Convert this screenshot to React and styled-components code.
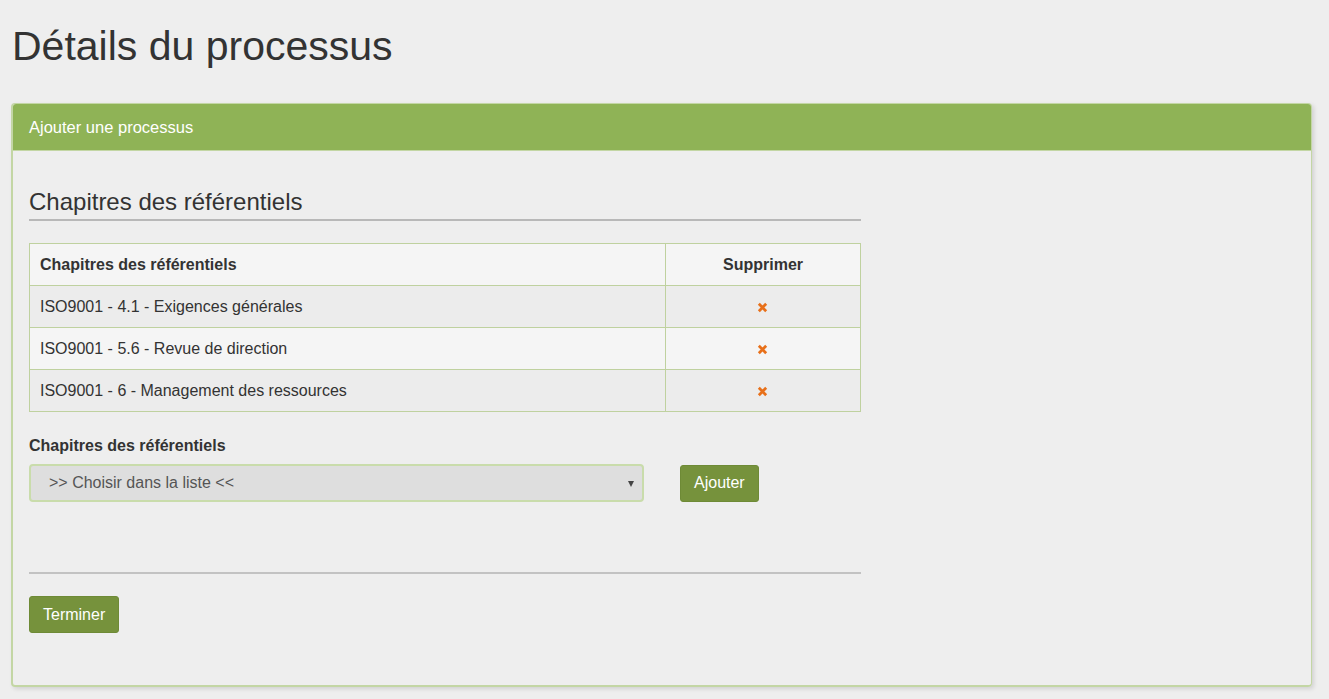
import React from "react";
import styled, { createGlobalStyle } from "styled-components";

const GlobalStyle = createGlobalStyle`
  html, body {
    margin: 0;
    padding: 0;
    background: #eeeeee;
    font-family: "Liberation Sans", Arial, sans-serif;
    color: #333;
  }
  * { box-sizing: border-box; }
`;

const Page = styled.div`
  padding: 0 17px 12px 11px;
`;

const PageTitle = styled.h1`
  margin: 0;
  padding: 23px 0 0 1px;
  height: 103px;
  font-size: 41px;
  font-weight: 400;
  color: #333;
`;

const Panel = styled.div`
  border: 1px solid #c3d6a4;
  border-radius: 4px;
  box-shadow: 2px 2px 4px rgba(0, 0, 0, 0.12);
  border-left-width: 2px;
  border-bottom-width: 2px;
`;

const PanelHeading = styled.div`
  background: #8fb356;
  color: #fff;
  height: 47px;
  padding: 0 16px;
  display: flex;
  align-items: center;
  font-size: 16.5px;
  border-radius: 3px 3px 0 0;
  border-bottom: 1px solid #c3d6a4;
`;

const PanelBody = styled.div`
  padding: 37px 16px 52px 16px;
`;

const Column = styled.div`
  width: 832px;
`;

const SectionTitle = styled.h3`
  margin: 0;
  font-size: 24px;
  font-weight: 400;
  color: #333;
  padding-bottom: 3px;
  border-bottom: 2px solid #b8b8b8;
`;

const Table = styled.table`
  width: 100%;
  margin-top: 22px;
  border-collapse: collapse;
  font-size: 16px;
`;

const Th = styled.th`
  height: 42px;
  border: 1px solid #bfd19f;
  background: #f5f5f5;
  font-weight: 700;
  text-align: ${(p) => (p.$center ? "center" : "left")};
  padding: 0 10px;
  width: ${(p) => p.$w || "auto"};
`;

const Row = styled.tr`
  background: ${(p) => (p.$odd ? "#ececec" : "#f5f5f5")};
`;

const Td = styled.td`
  height: 42px;
  border: 1px solid #bfd19f;
  padding: 0 10px;
  text-align: ${(p) => (p.$center ? "center" : "left")};
`;

const DeleteIcon = styled.svg`
  width: 11px;
  height: 11px;
  vertical-align: middle;
  display: inline-block;
  margin-left: -2px;
`;

const FieldLabel = styled.label`
  display: block;
  margin-top: 25px;
  font-size: 16px;
  font-weight: 700;
  color: #333;
`;

const FieldRow = styled.div`
  display: flex;
  align-items: center;
  gap: 36px;
  margin-top: 9px;
`;

const Select = styled.div`
  position: relative;
  width: 615px;
  height: 38px;
  background: #dedede;
  border: 2px solid #c9dcab;
  border-radius: 4px;
  padding: 0 18px;
  display: flex;
  align-items: center;
  font-size: 16px;
  color: #555;
`;

const Caret = styled.span`
  position: absolute;
  right: 8px;
  top: 15px;
  width: 0;
  height: 0;
  border-left: 3px solid transparent;
  border-right: 3px solid transparent;
  border-top: 6px solid #444;
`;

const Button = styled.button`
  height: 37px;
  padding: 0 13px;
  background: #76923c;
  border: 1px solid #6e8a36;
  border-radius: 3px;
  color: #fff;
  font-family: "Liberation Sans", Arial, sans-serif;
  font-size: 16px;
  cursor: pointer;
`;

const Divider = styled.hr`
  margin: 70px 0 0;
  border: 0;
  border-top: 2px solid #c2c2c2;
`;

const FinishRow = styled.div`
  margin-top: 22px;
`;

const Cross = () => (
  <DeleteIcon viewBox="0 0 12 12">
    <path d="M2 2 L10 10 M10 2 L2 10" stroke="#e8701a" strokeWidth="3" strokeLinecap="butt" />
  </DeleteIcon>
);

const chapitres = [
  "ISO9001 - 4.1 - Exigences générales",
  "ISO9001 - 5.6 - Revue de direction",
  "ISO9001 - 6 - Management des ressources",
];

export default function App() {
  return (
    <Page>
      <GlobalStyle />
      <PageTitle>Détails du processus</PageTitle>
      <Panel>
        <PanelHeading>Ajouter une processus</PanelHeading>
        <PanelBody>
          <Column>
            <SectionTitle>Chapitres des référentiels</SectionTitle>
            <Table>
              <thead>
                <tr>
                  <Th>Chapitres des référentiels</Th>
                  <Th $center $w="195px">Supprimer</Th>
                </tr>
              </thead>
              <tbody>
                {chapitres.map((c, i) => (
                  <Row key={c} $odd={i % 2 === 0}>
                    <Td>{c}</Td>
                    <Td $center>
                      <Cross />
                    </Td>
                  </Row>
                ))}
              </tbody>
            </Table>
            <FieldLabel>Chapitres des référentiels</FieldLabel>
            <FieldRow>
              <Select>
                &gt;&gt; Choisir dans la liste &lt;&lt;
                <Caret />
              </Select>
              <Button>Ajouter</Button>
            </FieldRow>
            <Divider />
            <FinishRow>
              <Button>Terminer</Button>
            </FinishRow>
          </Column>
        </PanelBody>
      </Panel>
    </Page>
  );
}
